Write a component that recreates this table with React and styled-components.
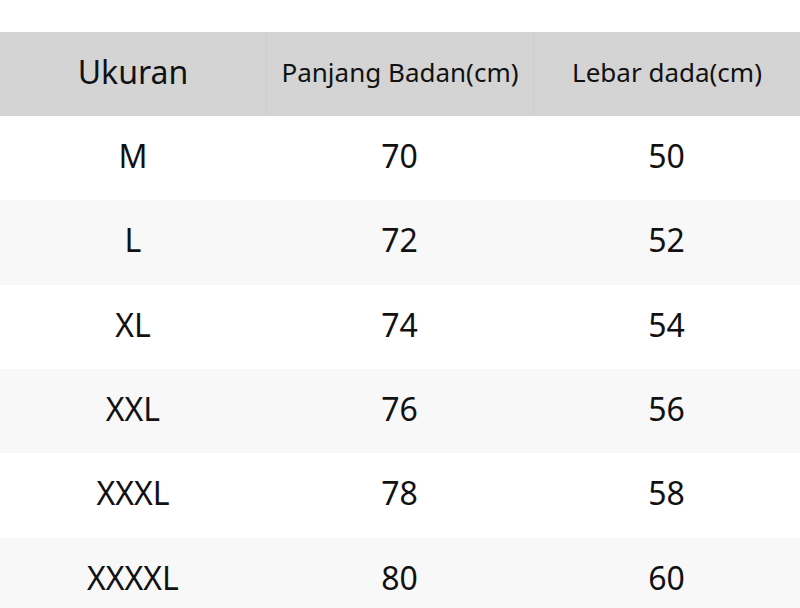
import React from "react";
import styled, { createGlobalStyle } from "styled-components";

const Global = createGlobalStyle`
  html, body { margin: 0; padding: 0; background: #ffffff; }
  body { font-family: "Noto Sans", "Open Sans", sans-serif; color: #111; }
`;

const Page = styled.div`
  width: 800px;
  height: 608px;
  overflow: hidden;
  padding-top: 32px;
  box-sizing: border-box;
`;

const Table = styled.div`
  display: grid;
  grid-template-columns: 266px 267px 267px;
`;

const HeadCell = styled.div`
  height: 84px;
  background: #d4d4d4;
  display: flex;
  align-items: center;
  justify-content: center;
  font-size: ${(p) => p.$size}px;
  padding-bottom: 5px;
  color: #111;
  border-left: ${(p) => (p.$first ? "none" : "1px solid #cecece")};
  box-sizing: border-box;
`;

const Cell = styled.div`
  height: ${(p) => p.$h}px;
  background: ${(p) => (p.$alt ? "#f8f8f8" : "#ffffff")};
  display: flex;
  align-items: center;
  justify-content: center;
  font-size: 32px;
  padding-bottom: 6px;
  box-sizing: border-box;
  color: #111;
`;

const rows = [
  ["M", "70", "50"],
  ["L", "72", "52"],
  ["XL", "74", "54"],
  ["XXL", "76", "56"],
  ["XXXL", "78", "58"],
  ["XXXXL", "80", "60"],
];

const heights = [84, 85, 84, 84, 85, 85];

export default function App() {
  return (
    <>
      <Global />
      <Page>
        <Table>
          <HeadCell $first $size={32}>Ukuran</HeadCell>
          <HeadCell $size={26}>Panjang Badan(cm)</HeadCell>
          <HeadCell $size={26}>Lebar dada(cm)</HeadCell>
          {rows.map((r, i) =>
            r.map((v, j) => (
              <Cell key={i + "-" + j} $alt={i % 2 === 1} $h={heights[i]}>
                {v}
              </Cell>
            ))
          )}
        </Table>
      </Page>
    </>
  );
}
